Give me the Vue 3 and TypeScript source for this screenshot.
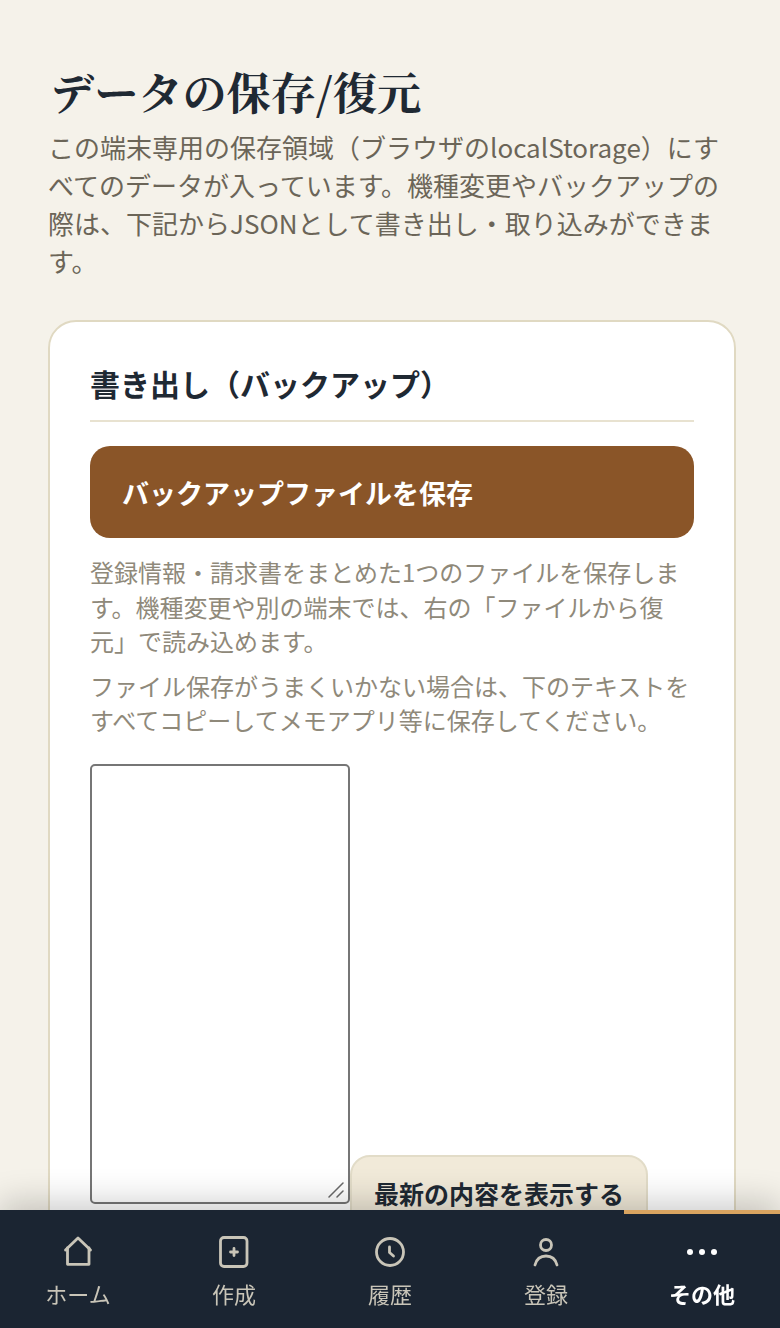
<script setup lang="ts">
interface NavItem { label: string; key: string; active?: boolean }
const items: NavItem[] = [
  { label: 'ホーム', key: 'home' },
  { label: '作成', key: 'create' },
  { label: '履歴', key: 'history' },
  { label: '登録', key: 'register' },
  { label: 'その他', key: 'more', active: true },
]
</script>

<template>
  <div class="page">
    <main class="content">
      <h1 class="title">データの保存/復元</h1>
      <p class="lead">この端末専用の保存領域（ブラウザのlocalStorage）にすべてのデータが入っています。機種変更やバックアップの際は、下記からJSONとして書き出し・取り込みができます。</p>
      <section class="card">
        <h2 class="card-title">書き出し（バックアップ）</h2>
        <button class="primary" type="button">バックアップファイルを保存</button>
        <p class="note first">登録情報・請求書をまとめた1つのファイルを保存します。機種変更や別の端末では、右の「ファイルから復元」で読み込めます。</p>
        <p class="note">ファイル保存がうまくいかない場合は、下のテキストをすべてコピーしてメモアプリ等に保存してください。</p>
        <div class="export">
          <textarea class="area"></textarea><button class="secondary" type="button">最新の内容を表示する</button>
          <svg class="grip" viewBox="0 0 16 16" fill="none" stroke="#6a6a6a" stroke-width="1.500" stroke-linecap="round">
            <path d="M1 15 15 1M9 15l6-6" />
          </svg>
        </div>
      </section>
    </main>
    <nav class="nav">
      <a v-for="item in items" :key="item.key" class="nav-item" :class="{ active: item.active }">
        <svg class="icon" viewBox="0 0 36 36" fill="none" stroke="currentColor" stroke-width="2.8" stroke-linecap="round" stroke-linejoin="round">
          <template v-if="item.key === 'home'">
            <path d="M5.500 16 18 4 30.500 16" />
            <path d="M7.500 14v16.300h21.500V14" />
          </template>
          <template v-else-if="item.key === 'create'">
            <rect x="4.500" y="3.500" width="26.500" height="29" rx="3.500" />
            <path d="M18 14.500v7M14.500 18h7" />
          </template>
          <template v-else-if="item.key === 'history'">
            <circle cx="18" cy="18" r="13.500" />
            <path d="M17.500 13v5.500l4 3.500" />
          </template>
          <template v-else-if="item.key === 'register'">
            <circle cx="18" cy="11" r="5.500" />
            <path d="M7 31c1.500-6 6-9 11-9s9.500 3 11 9" />
          </template>
          <template v-else>
            <circle cx="6" cy="18" r="3" fill="currentColor" stroke="none" />
            <circle cx="18" cy="18" r="3" fill="currentColor" stroke="none" />
            <circle cx="30" cy="18" r="3" fill="currentColor" stroke="none" />
          </template>
        </svg>
        <span class="label">{{ item.label }}</span>
      </a>
    </nav>
  </div>
</template>

<style>
html, body { margin: 0; background: #f5f2ea; }
</style>

<style scoped>
.page {
  height: 1328px;
  overflow: hidden;
  background: #f5f2ea;
  font-family: "Noto Sans CJK JP", "Noto Sans", sans-serif;
  color: #1f2933;
}
.content { padding: 60px 44px 0 48px; }
.title {
  margin: 0 0 0 2px;
  font-family: "Noto Serif CJK JP", "Noto Sans CJK JP", serif;
  font-size: 44.200px;
  line-height: 62px;
  font-weight: 700;
  color: #1f2933;
}
.lead {
  margin: 6px 0 0;
  font-size: 26px;
  line-height: 38px;
  color: #6b6558;
}
.card {
  margin-top: 40px;
  background: #fff;
  border: 2px solid #e0d9c2;
  border-radius: 28px;
  padding: 40px;
  height: 1200px;
  box-sizing: border-box;
}
.card-title {
  margin: 0 0 24px;
  padding-bottom: 16px;
  border-bottom: 2px solid #e8e2d0;
  font-size: 30px;
  line-height: 42px;
  font-weight: 700;
  color: #1f2933;
}
.primary {
  display: block;
  width: 100%;
  height: 92px;
  padding: 2px 32px 0;
  border: none;
  border-radius: 20px;
  background: #8a5528;
  color: #fff;
  font: 700 27px/40px "Noto Sans CJK JP", sans-serif;
  text-align: left;
}
.note {
  margin: 10px 0 0;
  font-size: 24px;
  line-height: 34.500px;
  color: #8f897a;
}
.note.first { margin-top: 17px; }
.export { position: relative; margin-top: 26px; font-size: 16px; }
.area {
  box-sizing: border-box;
  width: 260px;
  height: 440px;
  border: 2px solid #767676;
  border-radius: 5px;
  background: #fff;
  padding: 4px;
  margin: 0;
  resize: none;
}
.grip {
  position: absolute;
  left: 238px;
  top: 418px;
  width: 16px;
  height: 16px;
}
.secondary {
  box-sizing: border-box;
  height: 76px;
  padding: 0 22px;
  border: 2px solid #e2dcc8;
  border-radius: 20px;
  background: #f1ead9;
  color: #1f2933;
  font: 700 25px/36px "Noto Sans CJK JP", sans-serif;
  margin: 0;
}
.nav {
  position: fixed;
  left: 0;
  right: 0;
  bottom: 0;
  height: 118px;
  display: grid;
  grid-template-columns: repeat(5, 1fr);
  background: #1b2532;
  box-shadow: 0 -8px 32px rgba(0, 0, 0, 0.2);
}
.nav-item {
  position: relative;
  display: flex;
  flex-direction: column;
  align-items: center;
  padding-top: 24px;
  color: #c9c5b8;
}
.nav-item.active { color: #fff; }
.nav-item.active::before {
  content: "";
  position: absolute;
  left: 0;
  right: 0;
  top: 0;
  height: 4px;
  background: #d9a460;
}
.icon { width: 36px; height: 36px; display: block; }
.label {
  margin-top: 5px;
  font-size: 22px;
  line-height: 36px;
}
.active .label { font-weight: 700; }
</style>
